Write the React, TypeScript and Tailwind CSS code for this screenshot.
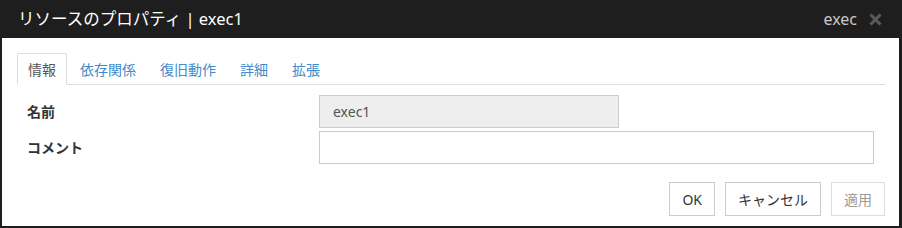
import React from 'react'

const font = { fontFamily: '"Noto Sans", "Noto Sans CJK JP", sans-serif' }

const tabs = ['情報', '依存関係', '復旧動作', '詳細', '拡張']

export default function App() {
  return (
    <div className="w-[902px] h-[228px] bg-[#1e1e1e] flex flex-col" style={font}>
      {/* Title bar */}
      <div className="h-[38px] flex items-center justify-between pl-[18px] pr-[20px]">
        <span className="text-white text-[16.5px] leading-none">リソースのプロパティ | exec1</span>
        <div className="flex items-center gap-[12px]">
          <span className="text-[#c8c8c8] text-[16px] leading-none">exec</span>
          <svg width="13" height="13" viewBox="0 0 13 13">
            <path d="M1.5 1.5 L11.5 11.5 M11.5 1.5 L1.5 11.5" stroke="#5a5a5a" strokeWidth="3" />
          </svg>
        </div>
      </div>

      {/* Body */}
      <div className="flex-1 bg-white ml-[2px] mr-[3px] mb-[2px] pt-[15px] pl-[15px] pr-[14px] flex flex-col">
        <div className="flex border-b border-[#dddddd] h-[32px]">
          {tabs.map((t, i) => (
            <div
              key={t}
              className={`px-[10px] mr-[2px] h-[32px] -mb-px flex items-center text-[14px] rounded-t-[2px] ${
                i === 0
                  ? 'bg-white border border-[#dddddd] border-b-white text-[#555555]'
                  : 'border border-transparent text-[#428bca]'
              }`}
            >
              {t}
            </div>
          ))}
        </div>

        <div className="mt-[10px] flex flex-col gap-[3px]">
          <div className="flex items-center">
            <label className="w-[302px] pl-[10px] text-[14px] font-bold text-[#333333]">名前</label>
            <div className="w-[300px] h-[33px] border border-[#cccccc] bg-[#eeeeee] flex items-center px-[13px] text-[14px] text-[#555555]">
              exec1
            </div>
          </div>
          <div className="flex items-center">
            <label className="w-[302px] pl-[10px] text-[14px] font-bold text-[#333333]">コメント</label>
            <div className="w-[555px] h-[33px] border border-[#cccccc] bg-white" />
          </div>
        </div>

        <div className="mt-[18px] flex justify-end gap-[10px]">
          <button className="h-[34px] px-[12px] border border-[#cccccc] bg-white text-[14px] text-[#333333]">OK</button>
          <button className="h-[34px] px-[12px] border border-[#cccccc] bg-white text-[14px] text-[#333333]">キャンセル</button>
          <button className="h-[34px] px-[12px] border border-[#dddddd] bg-white text-[14px] text-[#9a9a9a]">適用</button>
        </div>
      </div>
    </div>
  )
}
